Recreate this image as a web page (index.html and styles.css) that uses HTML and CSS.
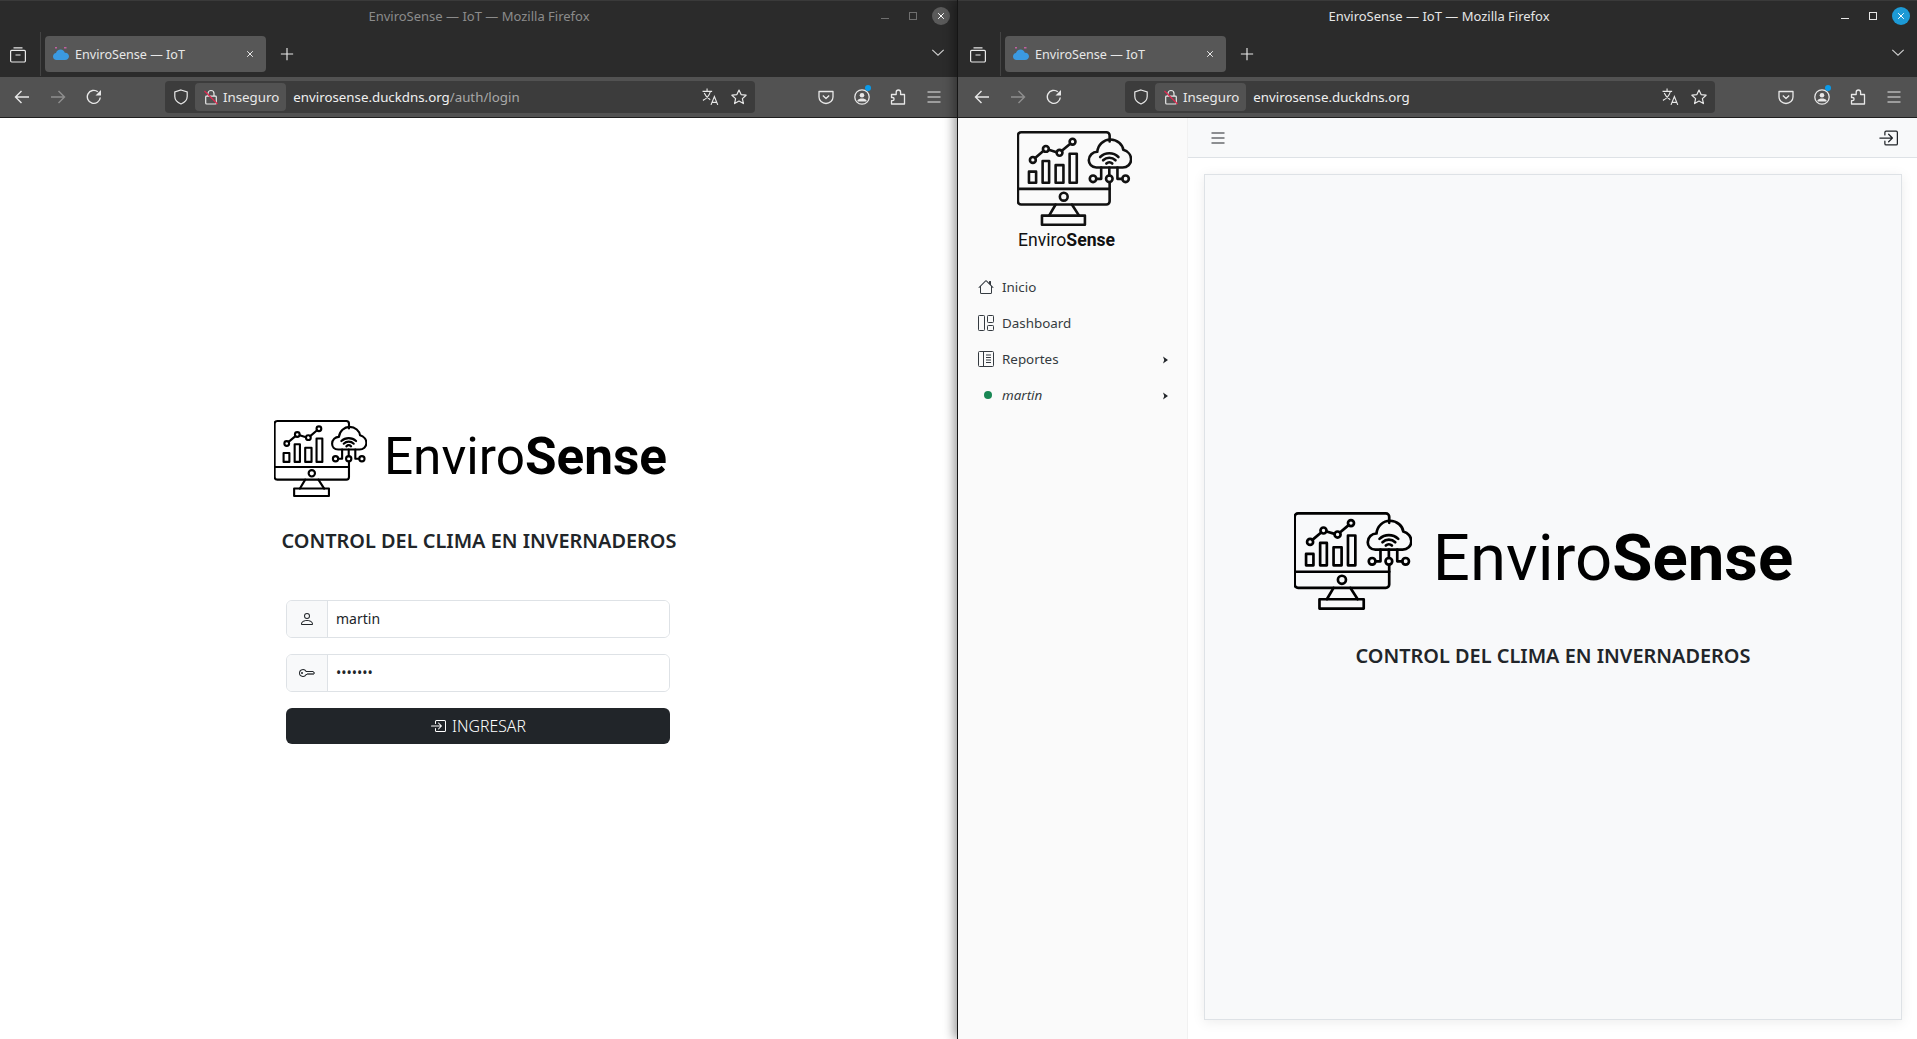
FILE: index.html
```html
<!DOCTYPE html>
<html lang="es">
<head>
    <meta charset="UTF-8">
    <title>EnviroSense — IoT</title>
    <link rel="stylesheet" href="styles.css">
</head>
<body>
    <svg class="defs" aria-hidden="true">
        <symbol id="logo" viewBox="42 38 352 292">
            <g fill="none" stroke="currentColor" stroke-width="8" stroke-linecap="round" stroke-linejoin="round">
                <path d="M326 70V52a10 10 0 0 0-10-10H54a10 10 0 0 0-10 10v202a10 10 0 0 0 10 10h262a10 10 0 0 0 10-10v-58"/>
                <path d="M44 216h282"/>
                <circle cx="185" cy="240" r="12"/>
                <path d="M160 264l-20 34M210 264l22 34"/>
                <rect x="118" y="298" width="132" height="28"/>
                <rect x="78" y="163" width="22" height="34"/>
                <rect x="120" y="130" width="20" height="67"/>
                <rect x="160" y="143" width="24" height="54"/>
                <rect x="203" y="108" width="22" height="89"/>
                <circle cx="90" cy="127" r="9"/>
                <circle cx="130" cy="93" r="9"/>
                <circle cx="172" cy="105" r="9"/>
                <circle cx="212" cy="71" r="9"/>
                <path d="M97 121l26-22M139 96l24 7M179 99l26-22"/>
                <path d="M285 150c-15 0-23-11-23-22 0-15 12-26 26-26 2-22 20-38 40-38 22 0 38 16 40 32 14 4 24 16 24 29 0 15-12 25-26 25z"/>
                <path d="M297 118a40 40 0 0 1 56 0M306 128a27 27 0 0 1 38 0M316 138a13 13 0 0 1 18 0"/>
                <path d="M300 150v35h-15M325 150v25M350 150v35h15"/>
                <circle cx="275" cy="185" r="10"/>
                <circle cx="325" cy="185" r="10"/>
                <circle cx="375" cy="185" r="10"/>
            </g>
        </symbol>
        <symbol id="i-tabs" viewBox="0 0 16 16"><path fill="none" stroke="currentColor" stroke-width="1.2" d="M3.500.8h9M1.600 3.400h12.800a1 1 0 0 1 1 1v9.400a1.200 1.200 0 0 1-1.200 1.200H1.800a1.200 1.200 0 0 1-1.200-1.200V4.400a1 1 0 0 1 1-1zM5.500 8h5"/></symbol>
        <symbol id="i-close" viewBox="0 0 16 16"><path fill="none" stroke="currentColor" stroke-width="1.6" d="M3.500 3.500l9 9M12.500 3.500l-9 9"/></symbol>
        <symbol id="i-plus" viewBox="0 0 16 16"><path fill="none" stroke="currentColor" stroke-width="1.3" d="M8 1v14M1 8h14"/></symbol>
        <symbol id="i-chevron" viewBox="0 0 16 16"><path fill="none" stroke="currentColor" stroke-width="1.3" d="M1.500 4.500L8 10.500l6.500-6"/></symbol>
        <symbol id="i-back" viewBox="0 0 16 16"><path fill="none" stroke="currentColor" stroke-width="1.4" d="M15 8H1.500M7.500 2L1.500 8l6 6"/></symbol>
        <symbol id="i-forward" viewBox="0 0 16 16"><path fill="none" stroke="currentColor" stroke-width="1.4" d="M1 8h13.500M8.500 2l6 6-6 6"/></symbol>
        <symbol id="i-reload" viewBox="0 0 16 16"><path fill="none" stroke="currentColor" stroke-width="1.4" d="M14.300 8.500A6.500 6.500 0 1 1 11.800 2.700"/><path fill="currentColor" d="M15 1v5.500H9.500z"/></symbol>
        <symbol id="i-shield" viewBox="0 0 16 16"><path fill="none" stroke="currentColor" stroke-width="1.2" d="M8 1l6.200 2v4.600c0 3.400-2.700 6-6.200 7.400-3.500-1.400-6.200-4-6.200-7.400V3z"/></symbol>
        <symbol id="i-lock" viewBox="0 0 16 16"><path fill="none" stroke="currentColor" stroke-width="1.200" d="M5 7V4.500a3 3 0 0 1 6 0V7M3.500 7.200h9a.8.8 0 0 1 .8.800v6a1 1 0 0 1-1 1H3.700a1 1 0 0 1-1-1V8a.8.8 0 0 1 .8-.8z"/><path fill="none" stroke="#e22850" stroke-width="1.300" d="M1.500 2l13 13"/></symbol>
        <symbol id="i-translate" viewBox="0 0 16 16"><path fill="none" stroke="currentColor" stroke-width="1" d="M.5 3h8.500M4.500.5V3M7.500 3C6.500 6.500 4 9.500 .8 11M2 4.500c1 2.500 2.800 4.500 5.300 6M8 15l3-7.500 3 7.500M9 12.800h4.200"/></symbol>
        <symbol id="i-star" viewBox="0 0 16 16"><path fill="none" stroke="currentColor" stroke-width="1.200" stroke-linejoin="round" d="M8 1l2.100 4.600 5 .6-3.700 3.400 1 5L8 12.100l-4.400 2.500 1-5L.9 6.200l5-.6z"/></symbol>
        <symbol id="i-pocket" viewBox="0 0 16 16"><path fill="none" stroke="currentColor" stroke-width="1.300" stroke-linejoin="round" d="M1 2.500h14v5.500a7 6.500 0 0 1-14 0zM4.800 6.500L8 9.500l3.200-3"/></symbol>
        <symbol id="i-profile" viewBox="0 0 16 16"><circle cx="8" cy="8" r="7.200" fill="none" stroke="currentColor" stroke-width="1.300"/><circle cx="8" cy="6.300" r="2.300" fill="currentColor"/><path fill="currentColor" d="M3.500 11.500c.8-1.500 2.500-2 4.500-2s3.700.5 4.500 2V12.500h-9z"/></symbol>
        <symbol id="i-ext" viewBox="0 0 16 16"><path fill="none" stroke="currentColor" stroke-width="1.300" stroke-linejoin="round" d="M1.500 15v-3.300h1a1.600 1.600 0 0 0 0-3.200h-1V5.500h4.700V3.200a2.200 2.200 0 0 1 4.400 0v2.300h3.900V15z"/></symbol>
        <symbol id="i-menu" viewBox="0 0 16 16"><path fill="none" stroke="currentColor" stroke-width="1.200" d="M1.500 3h13M1.500 8h13M1.500 13h13"/></symbol>
        <symbol id="i-person" viewBox="0 0 16 16"><path fill="currentColor" d="M8 8a3 3 0 1 0 0-6 3 3 0 0 0 0 6Zm2-3a2 2 0 1 1-4 0 2 2 0 0 1 4 0Zm4 8c0 1-1 1-1 1H3s-1 0-1-1 1-4 6-4 6 3 6 4Zm-1-.004c-.001-.246-.154-.986-.832-1.664C11.516 10.680 10.289 10 8 10c-2.290 0-3.516.680-4.168 1.332-.678.678-.830 1.418-.832 1.664h10Z"/></symbol>
        <symbol id="i-key" viewBox="0 0 16 16"><path fill="currentColor" d="M0 8a4 4 0 0 1 7.465-2H14a.5.5 0 0 1 .354.146l1.500 1.500a.5.5 0 0 1 0 .708l-1.500 1.500a.5.5 0 0 1-.708 0L13 9.207l-.646.647a.5.5 0 0 1-.708 0L11 9.207l-.646.647a.5.5 0 0 1-.708 0L9 9.207l-.646.647A.5.5 0 0 1 8 10h-.535A4 4 0 0 1 0 8zm4-3a3 3 0 1 0 2.712 4.285A.5.5 0 0 1 7.163 9h.63l.853-.854a.5.5 0 0 1 .708 0l.646.647.646-.647a.5.5 0 0 1 .708 0l.646.647.646-.647a.5.5 0 0 1 .708 0l.646.647.793-.793-1-1h-6.630a.5.5 0 0 1-.451-.285A3 3 0 0 0 4 5z"/><path fill="currentColor" d="M4 8a1 1 0 1 1-2 0 1 1 0 0 1 2 0z"/></symbol>
        <symbol id="i-enter" viewBox="0 0 16 16"><path fill="currentColor" d="M6 3.500a.5.5 0 0 1 .5-.5h8a.5.5 0 0 1 .5.5v9a.5.5 0 0 1-.5.5h-8a.5.5 0 0 1-.5-.5v-2a.5.5 0 0 0-1 0v2A1.500 1.500 0 0 0 6.500 14h8a1.500 1.500 0 0 0 1.500-1.500v-9A1.500 1.500 0 0 0 14.500 2h-8A1.500 1.500 0 0 0 5 3.500v2a.5.5 0 0 0 1 0v-2z"/><path fill="currentColor" d="M11.854 8.354a.5.5 0 0 0 0-.708l-3-3a.5.5 0 1 0-.708.708L10.293 7.500H1.500a.5.5 0 0 0 0 1h8.793l-2.147 2.146a.5.5 0 0 0 .708.708l3-3z"/></symbol>
        <symbol id="i-house" viewBox="0 0 16 16"><path fill="currentColor" d="M8.707 1.500a1 1 0 0 0-1.414 0L.646 8.146a.5.5 0 0 0 .708.708L2 8.207V13.500A1.500 1.500 0 0 0 3.500 15h9a1.500 1.500 0 0 0 1.500-1.500V8.207l.646.647a.5.5 0 0 0 .708-.708L13 5.793V2.500a.5.5 0 0 0-.5-.5h-1a.5.5 0 0 0-.5.5v1.293L8.707 1.500ZM13 7.207V13.500a.5.5 0 0 1-.5.5h-9a.5.5 0 0 1-.5-.5V7.207l5-5 5 5Z"/></symbol>
        <symbol id="i-layout" viewBox="0 0 16 16"><g fill="none" stroke="currentColor"><rect x=".5" y=".5" width="6" height="15" rx=".8"/><rect x="9.500" y=".5" width="6" height="7" rx=".8"/><rect x="9.500" y="10.500" width="6" height="5" rx=".8"/></g></symbol>
        <symbol id="i-journal" viewBox="0 0 16 16"><g fill="none" stroke="currentColor"><rect x=".5" y=".5" width="15" height="15" rx="1"/><path d="M5.500 .5v15M8 4h5M8 6.500h5M8 9h5M8 11.500h5"/></g></symbol>
        <symbol id="i-caret" viewBox="0 0 16 16"><path fill="currentColor" d="M4 1l10 7-10 7 2.500-7z"/></symbol>
    </svg>

    <div class="desktop">
        <section class="window window-inactive">
            <header class="titlebar">
                <span></span>
                <span class="title">EnviroSense — IoT — Mozilla Firefox</span>
                <div class="controls">
                    <span class="ctl ctl-min"></span>
                    <span class="ctl"><span class="ctl-max"></span></span>
                    <span class="ctl"><span class="ctl-close"><svg class="ico-10"><use href="#i-close"/></svg></span></span>
                </div>
            </header>
            <div class="tabbar">
                <span class="tab-list"><svg class="ico-16"><use href="#i-tabs"/></svg></span>
                <span class="tab-sep"></span>
                <div class="tab">
                    <svg class="favicon" viewBox="0 0 16 16"><path fill="#3b9ae1" d="M3.500 14C1.500 14 0 12.500 0 10.500S1.500 7.200 3 7C3.500 4.800 5.500 3.500 7.500 3.500c2.200 0 3.800 1.300 4.300 3.200 2.300-.2 4.200 1.400 4.200 3.600s-1.800 3.700-4 3.700z"/><path fill="#c060a0" d="M2 1h2v1.500H2zM11 1h2.500v1.500H11z"/></svg>
                    <span class="tab-text">EnviroSense — IoT</span>
                    <svg class="tab-close ico-10"><use href="#i-close"/></svg>
                </div>
                <span class="new-tab"><svg class="ico-14"><use href="#i-plus"/></svg></span>
                <span class="tab-more"><svg class="ico-14"><use href="#i-chevron"/></svg></span>
            </div>
            <div class="toolbar">
                <span class="nav-btn"><svg class="ico-16"><use href="#i-back"/></svg></span>
                <span class="nav-btn nav-off"><svg class="ico-16"><use href="#i-forward"/></svg></span>
                <span class="nav-btn nav-reload"><svg class="ico-16"><use href="#i-reload"/></svg></span>
                <div class="urlbar">
                    <svg class="url-shield ico-16"><use href="#i-shield"/></svg>
                    <span class="insecure"><svg class="ico-16"><use href="#i-lock"/></svg>Inseguro</span>
                    <span class="url">envirosense.duckdns.org<span class="url-path">/auth/login</span></span>
                    <svg class="url-translate ico-18"><use href="#i-translate"/></svg>
                    <svg class="url-star ico-16"><use href="#i-star"/></svg>
                </div>
                <div class="tool-icons">
                    <span class="tool"><svg class="ico-16"><use href="#i-pocket"/></svg></span>
                    <span class="tool tool-profile"><svg class="ico-16"><use href="#i-profile"/></svg></span>
                    <span class="tool"><svg class="ico-16"><use href="#i-ext"/></svg></span>
                    <span class="tool"><svg class="ico-16"><use href="#i-menu"/></svg></span>
                </div>
            </div>
            <main class="page login">
                <div class="brand brand-login">
                    <svg class="logo"><use href="#logo"/></svg>
                    <span class="brand-text">Enviro<b>Sense</b></span>
                </div>
                <h1 class="tagline tagline-login">CONTROL DEL CLIMA EN INVERNADEROS</h1>
                <form class="login-form">
                    <div class="input-group">
                        <span class="input-addon"><svg class="ico-16"><use href="#i-person"/></svg></span>
                        <input class="input" type="text" value="martin">
                    </div>
                    <div class="input-group">
                        <span class="input-addon"><svg class="ico-16"><use href="#i-key"/></svg></span>
                        <input class="input" type="password" value="martin1">
                    </div>
                    <button class="btn-login" type="button"><svg class="ico-16"><use href="#i-enter"/></svg>INGRESAR</button>
                </form>
            </main>
        </section>

        <section class="window window-active">
            <header class="titlebar">
                <span></span>
                <span class="title">EnviroSense — IoT — Mozilla Firefox</span>
                <div class="controls">
                    <span class="ctl ctl-min"></span>
                    <span class="ctl"><span class="ctl-max"></span></span>
                    <span class="ctl"><span class="ctl-close"><svg class="ico-10"><use href="#i-close"/></svg></span></span>
                </div>
            </header>
            <div class="tabbar">
                <span class="tab-list"><svg class="ico-16"><use href="#i-tabs"/></svg></span>
                <span class="tab-sep"></span>
                <div class="tab">
                    <svg class="favicon" viewBox="0 0 16 16"><path fill="#3b9ae1" d="M3.500 14C1.500 14 0 12.500 0 10.500S1.500 7.200 3 7C3.500 4.800 5.500 3.500 7.500 3.500c2.200 0 3.800 1.300 4.300 3.200 2.300-.2 4.200 1.400 4.200 3.600s-1.800 3.700-4 3.700z"/><path fill="#c060a0" d="M2 1h2v1.500H2zM11 1h2.500v1.500H11z"/></svg>
                    <span class="tab-text">EnviroSense — IoT</span>
                    <svg class="tab-close ico-10"><use href="#i-close"/></svg>
                </div>
                <span class="new-tab"><svg class="ico-14"><use href="#i-plus"/></svg></span>
                <span class="tab-more"><svg class="ico-14"><use href="#i-chevron"/></svg></span>
            </div>
            <div class="toolbar">
                <span class="nav-btn"><svg class="ico-16"><use href="#i-back"/></svg></span>
                <span class="nav-btn nav-off"><svg class="ico-16"><use href="#i-forward"/></svg></span>
                <span class="nav-btn nav-reload"><svg class="ico-16"><use href="#i-reload"/></svg></span>
                <div class="urlbar">
                    <svg class="url-shield ico-16"><use href="#i-shield"/></svg>
                    <span class="insecure"><svg class="ico-16"><use href="#i-lock"/></svg>Inseguro</span>
                    <span class="url">envirosense.duckdns.org</span>
                    <svg class="url-translate ico-18"><use href="#i-translate"/></svg>
                    <svg class="url-star ico-16"><use href="#i-star"/></svg>
                </div>
                <div class="tool-icons">
                    <span class="tool"><svg class="ico-16"><use href="#i-pocket"/></svg></span>
                    <span class="tool tool-profile"><svg class="ico-16"><use href="#i-profile"/></svg></span>
                    <span class="tool"><svg class="ico-16"><use href="#i-ext"/></svg></span>
                    <span class="tool"><svg class="ico-16"><use href="#i-menu"/></svg></span>
                </div>
            </div>
            <div class="page app">
                <aside class="sidebar">
                    <div class="side-brand">
                        <svg class="side-logo"><use href="#logo"/></svg>
                        <span class="side-text">Enviro<b>Sense</b></span>
                    </div>
                    <nav class="side-nav">
                        <a class="side-item"><svg class="ico-16"><use href="#i-house"/></svg>Inicio</a>
                        <a class="side-item"><svg class="ico-16"><use href="#i-layout"/></svg>Dashboard</a>
                        <a class="side-item"><svg class="ico-16"><use href="#i-journal"/></svg>Reportes<svg class="caret"><use href="#i-caret"/></svg></a>
                        <a class="side-item side-user"><span class="dot"></span>martin<svg class="caret"><use href="#i-caret"/></svg></a>
                    </nav>
                </aside>
                <div class="content">
                    <div class="navbar">
                        <svg class="ico-16"><use href="#i-menu"/></svg>
                        <svg class="ico-20"><use href="#i-enter"/></svg>
                    </div>
                    <main class="main">
                        <div class="card">
                            <div class="brand brand-card">
                                <svg class="logo"><use href="#logo"/></svg>
                                <span class="brand-text">Enviro<b>Sense</b></span>
                            </div>
                            <h1 class="tagline tagline-card">CONTROL DEL CLIMA EN INVERNADEROS</h1>
                        </div>
                    </main>
                </div>
            </div>
        </section>
    </div>
</body>
</html>
```

FILE: styles.css
```css
* { box-sizing: border-box; }
body { margin: 0; font-family: "Noto Sans", sans-serif; color: #212529; background: #111; overflow: hidden; }
svg { display: block; flex: none; }
.defs { width: 0; height: 0; position: absolute; }
.ico-10 { width: 10px; height: 10px; }
.ico-14 { width: 14px; height: 14px; }
.ico-16 { width: 16px; height: 16px; }
.ico-18 { width: 18px; height: 18px; }
.ico-20 { width: 20px; height: 20px; }

.desktop { display: flex; height: 1039px; overflow: hidden; }
.window { display: flex; flex-direction: column; flex: none; height: 1039px; background: #fff; }
.window-inactive { width: 958px; }
/* sits one px over the left window, its dark edge is the divider */
.window-active { width: 961px; margin-left: -1px; border-left: 1px solid #151515; box-shadow: -3px 0 10px rgba(0, 0, 0, .4); z-index: 1; }
.window-active .titlebar, .window-active .tabbar { padding-left: 2px; }
.window-active .toolbar { padding-left: 5px; }

/* firefox chrome */
.titlebar { display: grid; grid-template-columns: 1fr auto 1fr; align-items: center; height: 36px; padding-bottom: 6px; background: #2b2b2b; border-top: 1px solid #3a3a3a; font-size: 13px; }
.title { color: #e6e6e6; }
.window-inactive .title { color: #8b8b8b; }
.controls { display: flex; justify-content: flex-end; padding-right: 3px; }
.ctl { display: flex; align-items: center; justify-content: center; width: 28px; height: 20px; color: #e6e6e6; }
.ctl-min::before { content: ""; width: 8px; height: 1px; margin-top: 6px; background: currentColor; }
.ctl-max { width: 8px; height: 8px; border: 1px solid currentColor; }
.ctl-close { display: flex; align-items: center; justify-content: center; width: 18px; height: 18px; border-radius: 50%; background: #1d9ad6; color: #fff; }
.window-inactive .ctl { color: #6f6f6f; }
.window-inactive .ctl-close { background: #5a5a5a; color: #fff; }

.tabbar { display: flex; align-items: flex-start; height: 41px; background: #2b2b2b; color: #e8e8e8; }
.tab-list { display: flex; justify-content: center; width: 36px; padding-top: 11px; }
.tab-sep { width: 1px; height: 44px; margin: -4px 4px 0 4px; background: #444; }
.tab { display: flex; align-items: center; width: 221px; height: 36px; padding: 0 11px 0 8px; background: #575757; border-radius: 4px; font-size: 12.6px; }
.favicon { width: 16px; height: 16px; }
.tab-text { margin-left: 6px; }
.tab-close { margin-left: auto; }
.new-tab { display: flex; justify-content: center; width: 42px; padding-top: 11px; }
.tab-more { margin-left: auto; margin-right: 13px; padding-top: 10px; color: #cfcfcf; }

.toolbar { display: flex; align-items: center; height: 41px; padding-left: 3px; background: #525252; border-bottom: 1px solid #1f1f1f; color: #e8e8e8; }
.nav-btn { display: flex; justify-content: center; width: 38px; }
.nav-off { width: 33px; color: #8f8f8f; }
.nav-reload { width: 40px; }
.urlbar { display: flex; align-items: center; flex: 1; height: 32px; margin: -1px 0 0 51px; padding: 0 8px; background: #3c3c3c; border-radius: 4px; font-size: 13.3px; }
.insecure { display: flex; align-items: center; gap: 4px; height: 28px; margin-left: 6px; padding: 0 7px 0 8px; background: #525252; border-radius: 4px; }
.url { margin-left: 7px; color: #f0f0f0; }
.url-path { color: #a8a8a8; }
.url-translate { margin-left: auto; }
.url-star { margin-left: 11px; }
.tool-icons { display: flex; margin: 0 6px 0 53px; }
.tool { position: relative; display: flex; justify-content: center; width: 36px; }
.tool-profile::after { content: ""; position: absolute; top: -4px; left: 21px; width: 6px; height: 6px; border-radius: 50%; background: #0a9bea; }

/* pages */
.page { flex: 1; min-height: 0; }
.brand { display: flex; align-items: center; font-family: Roboto, sans-serif; color: #000; }
.brand-text { line-height: 1; white-space: nowrap; }
.brand-text b { font-weight: 700; }
.tagline { margin: 0; font-weight: 600; white-space: nowrap; color: #212529; font-size: 19.9px; }

.login { display: flex; flex-direction: column; align-items: center; padding-top: 302px; }
.brand-login { padding-right: 17px; gap: 17px; }
.brand-login .logo { width: 93px; height: 77px; }
.brand-login .brand-text { margin-top: -4px; font-size: 51.3px; }
.tagline-login { margin-top: 30px; }
.login-form { display: flex; flex-direction: column; gap: 16px; width: 384px; margin: 46px 2px 0 0; }
.input-group { display: flex; height: 38px; border: 1px solid #dee2e6; border-radius: 6px; overflow: hidden; }
.input-addon { display: flex; align-items: center; justify-content: center; width: 41px; background: #f8f9fa; border-right: 1px solid #dee2e6; }
.input { flex: 1; min-width: 0; padding: 0 8px 1px; border: 0; outline: 0; font: inherit; font-size: 14px; color: #212529; background: #fff; }
.btn-login { display: flex; align-items: center; justify-content: center; gap: 6px; height: 36px; border: 0; border-radius: 6px; background: #212529; color: #fff; font: inherit; font-size: 15.8px; font-weight: 300; }

.app { display: flex; }
.sidebar { width: 230px; flex: none; background: #fafafa; border-right: 1px solid #f1f1f1; }
.side-brand { display: flex; flex-direction: column; align-items: flex-start; padding: 13px 0 0 59px; font-family: Roboto, sans-serif; color: #111; }
.side-logo { width: 115px; height: 95px; }
.side-text { margin: 2px 0 0 1px; font-size: 17.6px; line-height: 24px; }
.side-nav { display: flex; flex-direction: column; margin-top: 17px; padding: 0 18px 0 20px; }
.side-item { display: flex; align-items: center; gap: 8px; height: 36px; font-size: 13.4px; color: #343a40; }
.caret { width: 8px; height: 8px; margin-left: auto; margin-top: 2px; color: #212529; }
.side-user { font-style: italic; }
.dot { width: 8px; height: 8px; margin: 0 2px 0 6px; border-radius: 50%; background: #198754; }

.content { display: flex; flex-direction: column; flex: 1; min-width: 0; }
.navbar { display: flex; align-items: center; justify-content: space-between; height: 40px; padding: 0 20px 0 22px; background: #f8f9fa; border-bottom: 1px solid #dee2e6; color: #212529; }
.main { flex: 1; min-height: 0; padding: 16px 16px 19px 16px; }
.card { display: flex; flex-direction: column; align-items: center; height: 100%; padding-top: 337px; background: #f8f9fa; border: 1px solid #dee2e6; box-shadow: 0 2px 12px rgba(0, 0, 0, .08); }
.brand-card { padding-right: 19px; gap: 21px; }
.brand-card .logo { width: 118px; height: 98px; }
.brand-card .brand-text { margin-top: -6px; font-size: 65.3px; }
.tagline-card { margin-top: 32px; }
```
